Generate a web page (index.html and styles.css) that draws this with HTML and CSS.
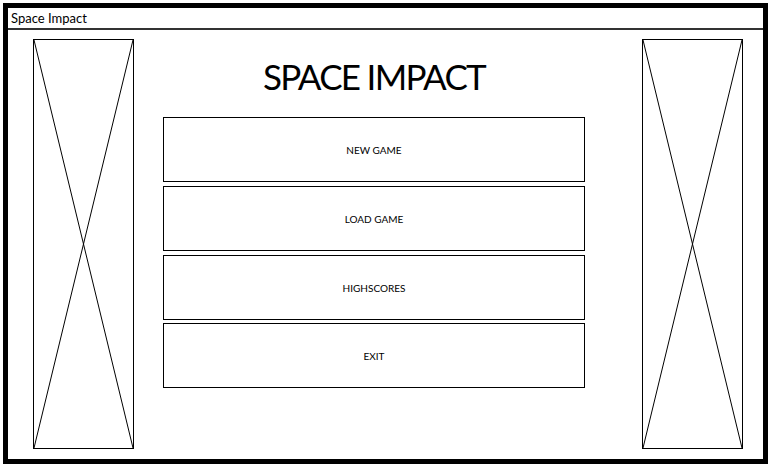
FILE: index.html
```html
<!DOCTYPE html>
<html lang="en">
<head>
  <meta charset="UTF-8">
  <title>Space Impact</title>
  <link rel="stylesheet" href="styles.css">
</head>
<body>

  <!-- Window frame -->
  <div class="window">
    <!-- Title bar -->
    <div class="title-bar">Space Impact</div>

    <!-- Main area: side images + menu -->
    <div class="main">
      <div class="placeholder">
        <svg viewBox="0 0 100 100" preserveAspectRatio="none">
          <line x1="0" y1="0" x2="100" y2="100" vector-effect="non-scaling-stroke"/>
          <line x1="100" y1="0" x2="0" y2="100" vector-effect="non-scaling-stroke"/>
        </svg>
      </div>

      <div class="menu">
        <h1 class="game-title">SPACE IMPACT</h1>
        <button class="menu-btn">NEW GAME</button>
        <button class="menu-btn">LOAD GAME</button>
        <button class="menu-btn">HIGHSCORES</button>
        <button class="menu-btn last">EXIT</button>
      </div>

      <div class="placeholder">
        <svg viewBox="0 0 100 100" preserveAspectRatio="none">
          <line x1="0" y1="0" x2="100" y2="100" vector-effect="non-scaling-stroke"/>
          <line x1="100" y1="0" x2="0" y2="100" vector-effect="non-scaling-stroke"/>
        </svg>
      </div>
    </div>
  </div>

</body>
</html>
```

FILE: styles.css
```css
/* Page basics */
body {
  background-color: white;
  color: black;
  font-family: Lato, "Noto Sans", sans-serif;
  margin: 0;
  padding: 3px 0 0 3px;
}

/* Thick black frame round the whole window */
.window {
  width: 765px;
  height: 461px;
  border: 5px solid black;
  box-sizing: border-box;
  display: flex;
  flex-direction: column;
}

/* Title bar at the top */
.title-bar {
  height: 20px;
  line-height: 20px;
  font-size: 13px;
  padding-left: 3px;
  border-bottom: 2px solid #333;
  flex-shrink: 0;
}

/* Row with the two images and the menu */
.main {
  flex: 1;
  display: flex;
  padding: 9px 20px 10px 25px;
}

/* Crossed boxes standing in for images */
.placeholder {
  width: 101px;
  height: 410px;
  border: 1px solid black;
  box-sizing: border-box;
  flex-shrink: 0;
}

.placeholder svg {
  display: block;
  width: 100%;
  height: 100%;
}

.placeholder line {
  stroke: black;
  stroke-width: 1;
}

/* Center menu */
.menu {
  flex: 1;
  display: flex;
  flex-direction: column;
  gap: 4px;
  padding-left: 29px;
}

.game-title {
  font-size: 35px;
  letter-spacing: -1.7px;
  font-weight: normal;
  margin: 0;
  height: 74px;
  line-height: 74px;
  width: 422px;
  text-align: center;
}

.menu-btn {
  width: 422px;
  height: 65px;
  border: 1px solid black;
  background: white;
  font-family: inherit;
  font-size: 10px;
  color: black;
  padding: 0;
}

.menu-btn.last {
  margin-top: -1px;
}
```
